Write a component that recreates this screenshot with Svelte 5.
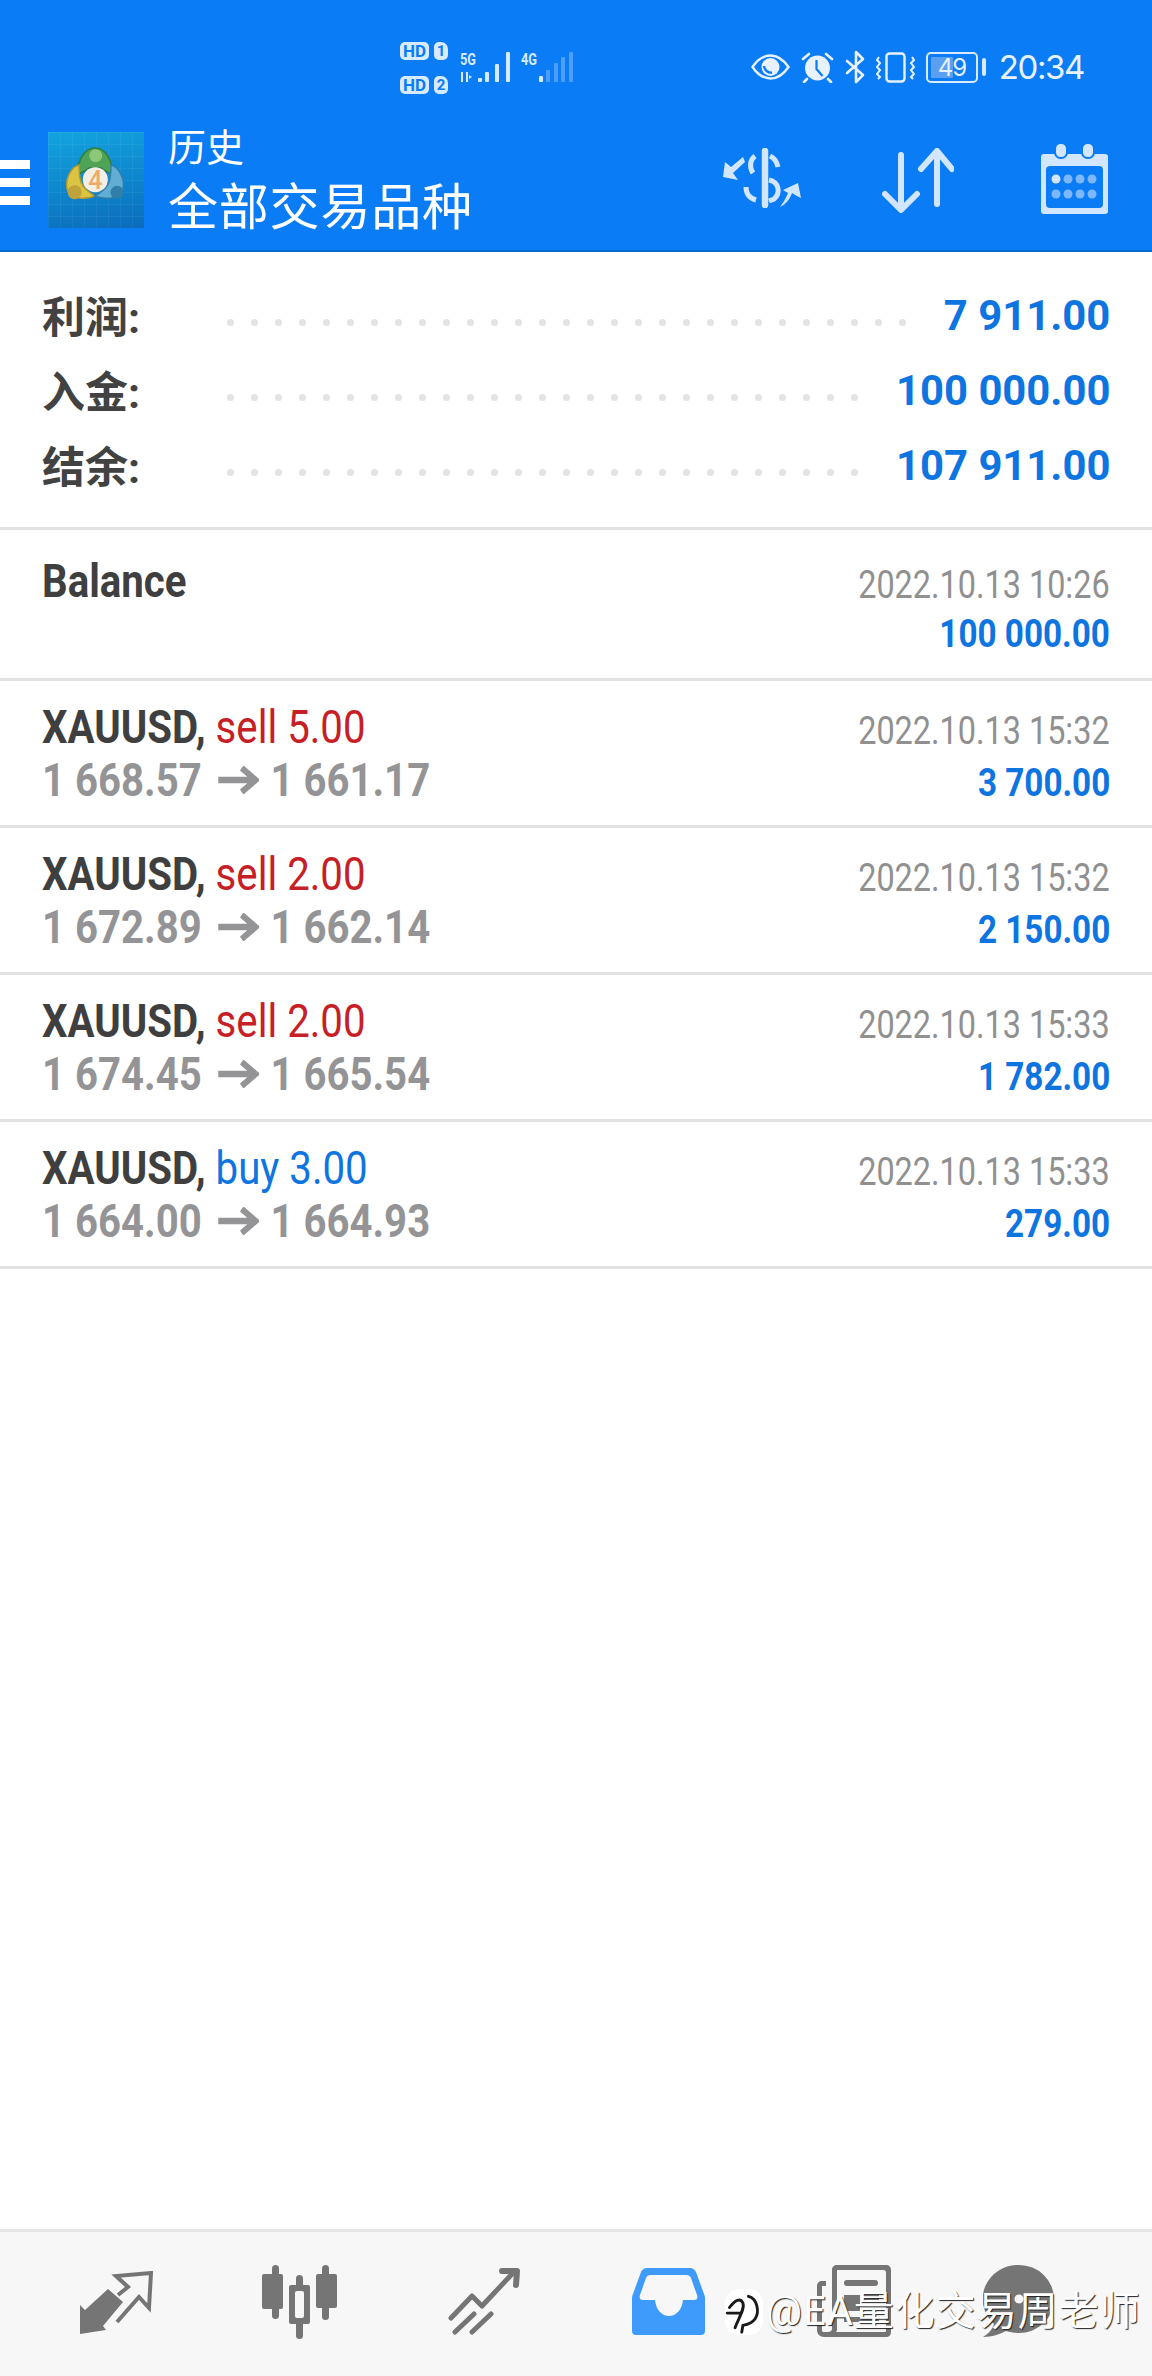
<script lang="ts">
  const summary = [
    { label: "利润:", value: "7 911.00", dots: 29 },
    { label: "入金:", value: "100 000.00", dots: 27 },
    { label: "结余:", value: "107 911.00", dots: 27 },
  ];

  const trades = [
    { sym: "XAUUSD,", side: "sell", lot: "5.00", open: "1 668.57", close: "1 661.17", time: "2022.10.13 15:32", profit: "3 700.00" },
    { sym: "XAUUSD,", side: "sell", lot: "2.00", open: "1 672.89", close: "1 662.14", time: "2022.10.13 15:32", profit: "2 150.00" },
    { sym: "XAUUSD,", side: "sell", lot: "2.00", open: "1 674.45", close: "1 665.54", time: "2022.10.13 15:33", profit: "1 782.00" },
    { sym: "XAUUSD,", side: "buy", lot: "3.00", open: "1 664.00", close: "1 664.93", time: "2022.10.13 15:33", profit: "279.00" },
  ];
</script>

<div class="screen">
  <header class="top">
    <div class="status">
      <div class="sims">
        <div class="sim"><span class="hd">HD</span><span class="card">1</span></div>
        <div class="sim"><span class="hd">HD</span><span class="card">2</span></div>
      </div>
      <svg class="signal" width="116" height="34" viewBox="0 0 116 34">
        <text x="0" y="15" class="net" textLength="16" lengthAdjust="spacingAndGlyphs">5G</text>
        <g fill="#d8eaff">
          <rect x="1" y="22" width="2" height="10" />
          <path d="M6 22h2v10H6zM9 25l3 2-3 2z" />
          <rect x="18" y="28" width="4" height="4" rx="1" />
          <rect x="25" y="22" width="4" height="10" rx="1" />
          <rect x="35" y="14" width="4" height="18" rx="1" />
          <rect x="46" y="2" width="4" height="30" rx="1" />
        </g>
        <text x="61" y="15" class="net" textLength="16" lengthAdjust="spacingAndGlyphs">4G</text>
        <rect x="79" y="26" width="4" height="6" rx="1" fill="#d8eaff" />
        <g fill="#4d9fff">
          <rect x="86" y="20" width="4" height="12" rx="1" />
          <rect x="94" y="13" width="4" height="19" rx="1" />
          <rect x="101" y="7" width="4" height="25" rx="1" />
          <rect x="109" y="2" width="4" height="30" rx="1" />
        </g>
      </svg>
      <div class="status-right">
        <svg width="39" height="26" viewBox="0 0 39 26">
          <path d="M1.5 13C7 5 13 1.500 19.500 1.500S32 5 37.500 13C32 21 26 24.500 19.500 24.500S7 21 1.500 13z" fill="none" stroke="#e8f2ff" stroke-width="2.4" />
          <circle cx="19.500" cy="13" r="9" fill="#e8f2ff" />
          <path d="M13 12a7 7 0 0 0 8 6.500" fill="none" stroke="#0a7cf5" stroke-width="2.4" />
        </svg>
        <svg width="33" height="31" viewBox="0 0 33 31">
          <circle cx="16.500" cy="16" r="12.500" fill="#e8f2ff" />
          <path d="M15.500 8v9l6 7" fill="none" stroke="#0a7cf5" stroke-width="2.200" />
          <path d="M2 7l6-5M31 7l-6-5M6 27l-3 3M27 27l3 3" stroke="#e8f2ff" stroke-width="2.600" fill="none" stroke-linecap="round" />
        </svg>
        <svg width="20" height="34" viewBox="0 0 20 34">
          <path d="M2 11l16 14-7 7V2l7 7L2 23" fill="none" stroke="#e8f2ff" stroke-width="2.600" stroke-linejoin="round" stroke-linecap="round" />
        </svg>
        <svg width="39" height="31" viewBox="0 0 39 31">
          <rect x="10.500" y="1.500" width="18" height="28" rx="3" fill="none" stroke="#e8f2ff" stroke-width="2.400" />
          <path d="M3 5l-2 3 3 3-3 4 3 3-3 4 3 3-2 2M36 5l2 3-3 3 3 4-3 3 3 4-3 3 2 2" fill="none" stroke="#e8f2ff" stroke-width="2" />
        </svg>
        <div class="battery">
          <div class="batt-body"><span class="batt-fill"></span><span class="batt-num">49</span></div>
          <span class="batt-cap"></span>
        </div>
        <span class="clock">20:34</span>
      </div>
    </div>

    <div class="bar">
      <div class="burger"><span></span><span></span><span></span></div>
      <div class="logo">
        <svg width="96" height="96" viewBox="0 0 96 96">
          <path d="M47 16c-10 0-18 12-17 26 4-1 8-4 11-6h12c3 2 7 5 11 6 1-14-7-26-17-26z" fill="#4ea354" stroke="#2f7d43" stroke-width="1.500" />
          <path d="M31 33c-8 2-14 14-12 24 2 8 14 12 28 7-4-2-12-8-14-14-2-6-2-12-2-17z" fill="#dcc443" stroke="#b3982f" stroke-width="1.500" />
          <path d="M63 33c8 2 14 14 12 24-2 8-14 12-28 7 4-2 12-8 14-14 2-6 2-12 2-17z" fill="#62add4" stroke="#2f7fa8" stroke-width="1.500" />
          <circle cx="47.700" cy="23.700" r="6.500" fill="#8cc878" />
          <circle cx="26.700" cy="60.300" r="7" fill="#bfa23a" />
          <circle cx="69" cy="60.300" r="6.500" fill="#2f7fa8" />
          <circle cx="47.300" cy="47.700" r="12.500" fill="#f4efe6" />
          <text x="47.300" y="56.500" class="four">4</text>
        </svg>
      </div>
      <div class="titles">
        <div class="sub">历史</div>
        <div class="main">全部交易品种</div>
      </div>
      <div class="actions">
        <svg class="act-money" width="78" height="60" viewBox="0 0 78 60">
          <g fill="none" stroke="#d3e6ff">
            <path d="M42 3v54" stroke-width="6.500" stroke-linecap="round" />
            <path d="M32 8c-5 4-6 11-2 17" stroke-width="5" />
            <path d="M47 8c4 2 7 6 8 11" stroke-width="5" />
            <path d="M46 32c10 2 12 13 5 19l-5 2" stroke-width="5" />
            <path d="M23 39c0 6 3 11 10 13" stroke-width="5" />
          </g>
          <path d="M20 9L8 19 2 14l-2 15 15 3-5-7 12-11z" fill="#d3e6ff" />
          <path d="M57 59c6-3 10-8 12-14l5 3 4 2-3-15-15 7 5 3c-2 5-5 10-8 14z" fill="#d3e6ff" />
        </svg>
        <svg class="act-sort" width="72" height="65" viewBox="0 0 72 65">
          <path d="M19 7v54M3 46l16 16 16-16" fill="none" stroke="#d3e6ff" stroke-width="6" stroke-linecap="round" stroke-linejoin="round" />
          <path d="M55 56V3M39 21L55 3l15 18" fill="none" stroke="#d3e6ff" stroke-width="6" stroke-linecap="round" stroke-linejoin="round" />
        </svg>
        <svg class="act-cal" width="69" height="71" viewBox="0 0 69 71">
          <path d="M4 11h61a3 3 0 0 1 3 3v54a3 3 0 0 1-3 3H4a3 3 0 0 1-3-3V14a3 3 0 0 1 3-3z" fill="#d3e6ff" />
          <rect x="6" y="23" width="57" height="42" rx="4" fill="#0a7cf5" />
          <rect x="15" y="0" width="12" height="15" rx="5.500" fill="#d3e6ff" stroke="#0a7cf5" stroke-width="2" />
          <rect x="42" y="0" width="12" height="15" rx="5.500" fill="#d3e6ff" stroke="#0a7cf5" stroke-width="2" />
          <g fill="#7db8ff">
            <circle cx="16" cy="36" r="4.500" fill="#d3e6ff" /><circle cx="28" cy="36" r="4.500" /><circle cx="40" cy="36" r="4.500" /><circle cx="52" cy="36" r="4.500" />
            <circle cx="16" cy="51" r="4.500" /><circle cx="28" cy="51" r="4.500" /><circle cx="40" cy="51" r="4.500" /><circle cx="52" cy="51" r="4.500" />
          </g>
        </svg>
      </div>
    </div>
  </header>

  <section class="summary">
    {#each summary as row}
      <div class="sum-row">
        <span class="sum-label">{row.label}</span>
        <span class="dots">
          {#each Array(row.dots) as _}<i></i>{/each}
        </span>
        <span class="sum-value">{row.value}</span>
      </div>
    {/each}
  </section>

  <div class="row balance">
    <div class="left">
      <div class="line1"><span class="cond-l"><b class="dark">Balance</b></span></div>
    </div>
    <div class="right">
      <div class="time"><span class="cond-r">2022.10.13 10:26</span></div>
      <div class="profit"><span class="cond-r">100 000.00</span></div>
    </div>
  </div>

  {#each trades as t}
    <div class="row">
      <div class="left">
        <div class="line1"><span class="cond-l"><b class="dark">{t.sym}</b> <span class={t.side}>{t.side} {t.lot}</span></span></div>
        <div class="line2">
          <span class="cond-l">{t.open} <svg class="arrow" width="47" height="28" viewBox="0 0 47 28"><path d="M0 14H43M27 2l16 12-16 12" fill="none" stroke="currentColor" stroke-width="6.500" /></svg> {t.close}</span>
        </div>
      </div>
      <div class="right">
        <div class="time"><span class="cond-r">{t.time}</span></div>
        <div class="profit"><span class="cond-r">{t.profit}</span></div>
      </div>
    </div>
  {/each}

  <div class="spacer"></div>

  <nav class="tabs">
    <svg width="73" height="63" viewBox="0 0 73 63">
      <path d="M0 34v29l26-4-3-4 20-24-15-13-23 21z" fill="#757575" />
      <path d="M37 51L59 26l10 11 2-35-35 3 12 11-10 8" fill="none" stroke="#757575" stroke-width="4" />
    </svg>
    <svg width="76" height="74" viewBox="0 0 76 74">
      <g fill="#757575">
        <rect x="10" y="0" width="7" height="54" rx="3.500" />
        <rect x="0" y="9" width="21" height="35" rx="2" />
        <rect x="60" y="0" width="7" height="55" rx="3.500" />
        <rect x="54" y="9" width="21" height="34" rx="2" />
        <rect x="34" y="10" width="7" height="64" rx="3.500" />
        <rect x="27" y="20" width="21" height="39" rx="2" />
      </g>
      <rect x="33" y="26" width="9" height="27" rx="2" fill="#f7f7f7" />
    </svg>
    <svg width="72" height="67" viewBox="0 0 72 67">
      <path d="M3 50l21-22 10 10 30-32" fill="none" stroke="#757575" stroke-width="5" stroke-linecap="round" stroke-linejoin="round" />
      <path d="M54 3h15l-1 14" fill="none" stroke="#757575" stroke-width="6" stroke-linecap="round" stroke-linejoin="round" />
      <path d="M7 64l19-18M24 64l19-18" fill="none" stroke="#757575" stroke-width="5" stroke-linecap="round" />
    </svg>
    <svg width="73" height="67" viewBox="0 0 73 67">
      <path d="M15 0h43c3 0 5 2 6 4l8 22c1 2 1 4 1 6v31c0 3-2 4-4 4H4c-2 0-4-1-4-4V32c0-2 0-4 1-6L9 4c1-2 3-4 6-4z" fill="#3f9bfb" />
      <path d="M19 7h35c3 0 4 1 5 3l6 17c1 3 0 5-3 5H51c-1 10-7 16-14 16s-13-6-14-16H11c-3 0-4-2-3-5l6-17c1-2 2-3 5-3z" fill="#f7f7f7" />
    </svg>
    <svg width="74" height="72" viewBox="0 0 74 72">
      <path d="M15 5c0-3 2-5 5-5h49c3 0 5 2 5 5v62c0 3-2 5-5 5H7c-4 0-7-3-7-7V21c0-3 2-5 5-5h4v5H5v44c0 2 1 2 2 2h4c2 0 4-1 4-3zm5 0v59c0 1 0 2-1 3h49c1 0 1-1 1-2V7c0-1-1-2-2-2z" fill="#757575" fill-rule="evenodd" />
      <rect x="27" y="15" width="34" height="6" rx="3" fill="#757575" />
      <rect x="27" y="30" width="16" height="16" fill="#757575" />
      <rect x="48" y="30" width="14" height="5" fill="#757575" />
      <rect x="27" y="52" width="35" height="5" fill="#757575" />
    </svg>
    <svg width="71" height="72" viewBox="0 0 71 72">
      <path d="M36 0a35 34 0 0 1 0 68c-5 0-9-1-13-2-6 3-14 6-23 6 5-3 9-7 11-13A35 34 0 0 1 36 0z" fill="#757575" />
      <circle cx="36" cy="34" r="4.500" fill="#f7f7f7" />
    </svg>
    <div class="watermark">
      <span class="wm-logo">
        <svg width="38" height="50" viewBox="0 0 34 44">
          <path d="M4 18c5-7 10-9 12-4 2 5-4 14-7 22M2 23h12M21 8c8 2 10 14 6 20-2 3-6 5-11 6l-1 6" fill="none" stroke="#1a1a1a" stroke-width="2.600" stroke-linecap="round" />
        </svg>
      </span>
      <span class="wm-text">@EA量化交易周老师</span>
    </div>
  </nav>
</div>

<style>
  :global(body) {
    margin: 0;
    background: #fff;
  }

  .screen {
    width: 1152px;
    height: 2376px;
    display: flex;
    flex-direction: column;
    overflow: hidden;
    font-family: Roboto, "Noto Sans CJK SC", sans-serif;
    background: #fff;
  }

  .top {
    background: #0a7cf5;
    height: 252px;
    box-sizing: border-box;
    border-bottom: 2px solid #0a68d0;
    color: #fff;
  }

  .status {
    height: 126px;
    display: flex;
    align-items: center;
    box-sizing: border-box;
    padding: 0 68px 0 400px;
  }

  .sims {
    display: flex;
    flex-direction: column;
    gap: 16px;
    margin-right: 12px;
    margin-top: 10px;
  }

  .sim {
    display: flex;
    gap: 5px;
    height: 18px;
  }

  .hd,
  .card {
    background: #d8eaff;
    color: #0a7cf5;
    font: 700 17px/18px "Roboto", sans-serif;
    border-radius: 5px;
    text-align: center;
  }

  .hd {
    width: 29px;
  }

  .card {
    width: 14px;
    font-size: 15px;
    border-top-right-radius: 7px;
  }

  .signal {
    margin-top: 8px;
  }

  .net {
    fill: #d8eaff;
    font: 700 17px "Roboto", sans-serif;
  }

  .status-right {
    margin-left: auto;
    margin-top: 8px;
    display: flex;
    align-items: center;
    gap: 11px;
  }

  .battery {
    display: flex;
    align-items: center;
    gap: 4px;
    margin-right: 2px;
  }

  .batt-body {
    width: 52px;
    height: 31px;
    box-sizing: border-box;
    border: 2px solid #d8eaff;
    border-radius: 5px;
    position: relative;
    padding: 3px;
  }

  .batt-fill {
    display: block;
    width: 52%;
    height: 100%;
    background: #5a9ff0;
    border-radius: 1px;
  }

  .batt-num {
    position: absolute;
    inset: 0;
    text-align: center;
    font: 400 24px/27px "Inter", sans-serif;
    color: #e8f2ff;
    letter-spacing: -1px;
  }

  .batt-cap {
    width: 4px;
    height: 18px;
    background: #d8eaff;
    border-radius: 2px;
  }

  .clock {
    font: 400 33px/34px "Inter", sans-serif;
    color: #e8f2ff;
    letter-spacing: -1.400px;
  }

  .bar {
    height: 124px;
    display: flex;
    align-items: center;
  }

  .burger {
    width: 30px;
    display: flex;
    flex-direction: column;
    gap: 9px;
    margin-top: -12px;
  }

  .burger span {
    height: 9px;
    background: #fff;
  }

  .logo {
    width: 96px;
    height: 96px;
    margin: -16px 0 0 18px;
    background:
      linear-gradient(#ffffff0d 1px, transparent 1px) 0 0 / 12px 12px,
      linear-gradient(90deg, #ffffff0d 1px, transparent 1px) 0 0 / 12px 12px,
      linear-gradient(170deg, #12a4e0, #0a6cbc);
  }

  .logo svg {
    display: block;
  }

  .four {
    fill: #eeaa66;
    font: 500 25px "Roboto", sans-serif;
    text-anchor: middle;
  }

  .titles {
    margin-left: 24px;
    margin-top: -11px;
  }

  .sub {
    font-size: 38px;
    line-height: 42px;
  }

  .main {
    font-size: 50px;
    line-height: 60px;
    letter-spacing: 0.800px;
    margin-top: 9px;
  }

  .actions {
    margin-left: auto;
    align-self: flex-start;
    margin-top: 17px;
    padding-right: 43px;
    display: flex;
    align-items: flex-start;
  }

  .act-money {
    margin-top: 5px;
    margin-right: 81px;
  }

  .act-sort {
    margin-top: 5px;
    margin-right: 86px;
  }

  .summary {
    height: 278px;
    flex: none;
    box-sizing: border-box;
    padding: 26px 42px 0;
    border-bottom: 3px solid #e2e2e2;
  }

  .sum-row {
    height: 75px;
    display: flex;
    align-items: center;
  }

  .sum-label {
    font-size: 43px;
    font-weight: 700;
    color: #424242;
    width: 185px;
    flex: none;
    margin-top: -4px;
  }

  .dots {
    display: flex;
    gap: 17px;
    margin-top: 14px;
  }

  .dots i {
    width: 7px;
    height: 7px;
    border-radius: 50%;
    background: #e3e3e3;
  }

  .sum-value {
    margin-left: auto;
    color: #0e74e0;
    font-size: 42px;
    font-weight: 700;
    white-space: nowrap;
    transform: scaleX(0.995);
    transform-origin: right center;
  }

  .row {
    height: 147px;
    flex: none;
    box-sizing: border-box;
    padding: 18px 42px 0;
    display: flex;
    justify-content: space-between;
    border-bottom: 3px solid #e2e2e2;
  }

  .balance {
    height: 151px;
    padding-top: 23px;
  }

  .left,
  .right {
    white-space: nowrap;
  }

  .right {
    text-align: right;
  }

  .cond-l,
  .cond-r {
    display: inline-block;
  }

  .cond-l {
    transform-origin: left center;
  }

  .cond-r {
    transform-origin: right center;
  }

  .line1 {
    font-size: 47px;
    line-height: 56px;
  }

  .line1 .cond-l {
    transform: scaleX(0.855);
  }

  .line2 {
    font-size: 46px;
    line-height: 50px;
    color: #949496;
    font-weight: 700;
  }

  .line2 .cond-l {
    transform: scaleX(0.872);
  }

  .dark {
    color: #3f3f3f;
    font-weight: 700;
  }

  .sell {
    color: #c62026;
  }

  .buy {
    color: #0e74e0;
  }

  .arrow {
    vertical-align: 2px;
    margin: 0 2px 0 7px;
  }

  .time {
    font-size: 39.500px;
    line-height: 50px;
    color: #909090;
    margin-top: 7px;
  }

  .time .cond-r {
    transform: scaleX(0.82);
  }

  .profit {
    font-size: 38px;
    line-height: 50px;
    color: #0e74e0;
    font-weight: 700;
    margin-top: 2px;
  }

  .profit .cond-r {
    transform: scaleX(0.875);
  }

  .balance .profit {
    margin-top: -1px;
  }

  .spacer {
    flex: 1;
  }

  .tabs {
    height: 147px;
    box-sizing: border-box;
    background: #f7f7f7;
    border-top: 3px solid #e6e6e6;
    position: relative;
    flex: none;
  }

  .tabs > svg {
    position: absolute;
  }

  .tabs > svg:nth-of-type(1) { left: 80px; top: 39px; }
  .tabs > svg:nth-of-type(2) { left: 262px; top: 33px; }
  .tabs > svg:nth-of-type(3) { left: 448px; top: 36px; }
  .tabs > svg:nth-of-type(4) { left: 632px; top: 36px; }
  .tabs > svg:nth-of-type(5) { left: 817px; top: 33px; }
  .tabs > svg:nth-of-type(6) { left: 983px; top: 33px; }

  .watermark {
    position: absolute;
    left: 725px;
    top: 56px;
    display: flex;
    align-items: center;
    gap: 3px;
  }

  .wm-logo {
    width: 38px;
    height: 46px;
    background: #fff;
    border-radius: 14px;
    display: flex;
    align-items: center;
    justify-content: center;
  }

  .wm-text {
    font-size: 40px;
    line-height: 48px;
    letter-spacing: 1px;
    color: #fff;
    text-shadow: 1px 1px 1px #222;
    white-space: nowrap;
  }
</style>
